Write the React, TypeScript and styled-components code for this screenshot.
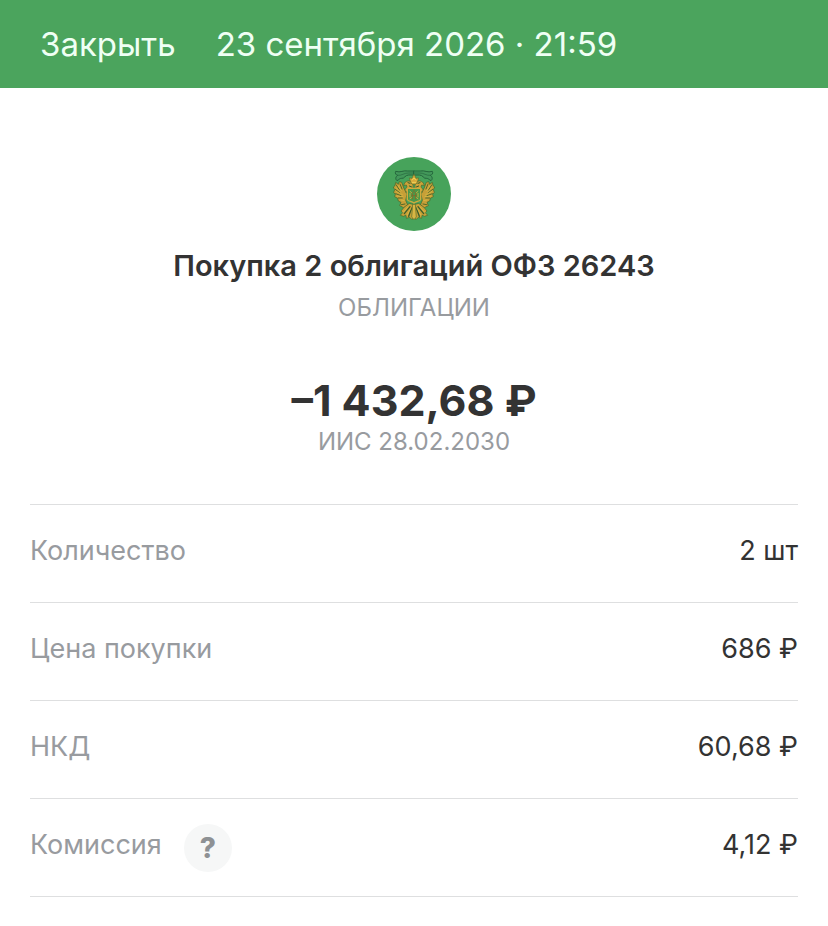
import React from 'react';
import styled, { createGlobalStyle } from 'styled-components';

interface DetailItem {
  label: string;
  value: string;
  hint?: string;
}

const details: DetailItem[] = [
  { label: 'Количество', value: '2 шт' },
  { label: 'Цена покупки', value: '686 ₽' },
  { label: 'НКД', value: '60,68 ₽' },
  { label: 'Комиссия', value: '4,12 ₽', hint: 'Подробнее о комиссии' },
];

const GlobalStyle = createGlobalStyle`
  * {
    box-sizing: border-box;
  }

  body {
    margin: 0;
    background: #ffffff;
    color: #333333;
    font-family: Inter, 'Liberation Sans', sans-serif;
  }
`;

const TopBar = styled.header`
  display: flex;
  align-items: center;
  gap: 40px;
  padding: 22px 40px;
  background: #4ba45d;
  color: #effff4;
  font-size: 33px;
  line-height: 44px;
`;

const CloseButton = styled.button`
  padding: 0;
  border: none;
  background: none;
  color: inherit;
  font: inherit;
  cursor: pointer;
`;

const Content = styled.main`
  padding: 68px 30px 28px;
`;

const Summary = styled.section`
  display: flex;
  flex-direction: column;
  align-items: center;
  text-align: center;
`;

const Emblem = styled.svg`
  width: 76px;
  height: 76px;
`;

const Title = styled.h1`
  margin: 16px 0 0;
  font-size: 29px;
  font-weight: 600;
  line-height: 36px;
`;

const Caption = styled.p`
  margin: 0;
  color: #989b9f;
  font-size: 24px;
  line-height: 32px;
`;

const Category = styled(Caption)`
  margin-top: 8px;
`;

const Amount = styled.p`
  margin: 50px 0 0;
  font-size: 43px;
  font-weight: 700;
  line-height: 52px;
`;

const DetailList = styled.dl`
  margin: 46px 0 0;
  border-bottom: 1px solid #dedfe0;
`;

const DetailRow = styled.div`
  display: flex;
  align-items: center;
  justify-content: space-between;
  height: 98px;
  padding-bottom: 6px;
  border-top: 1px solid #dedfe0;
  font-size: 27px;
  line-height: 36px;
`;

const DetailLabel = styled.dt`
  display: flex;
  align-items: center;
  gap: 22px;
  color: #989b9f;
`;

const DetailValue = styled.dd`
  margin: 0;
`;

const HintButton = styled.button`
  width: 48px;
  height: 48px;
  margin-top: 6px;
  padding: 0;
  border: none;
  border-radius: 50%;
  background: #f6f7f7;
  color: #8e9194;
  font-family: inherit;
  font-size: 28px;
  font-weight: 800;
  line-height: 48px;
  cursor: pointer;
`;

const EagleWing: React.FC = () => (
  <g strokeLinejoin="round" strokeLinecap="round">
    <path
      d="M80 92 L74 76 L67 74 L64 82 L56 76 L54 86 L49 90 L53 98 L50 106 L55 112 L53 119 L62 124 L64 132 L72 136 L68 146 L80 152 L92 144 L86 130 L90 112 Z"
      fill="#c79f37"
      stroke="#43652a"
      strokeWidth="2"
    />
    <path
      d="M69 81 L75 96 M58 84 L68 100 M55 97 L69 108 M56 110 L72 116 M64 123 L76 123 M73 143 L84 141"
      fill="none"
      stroke="#53692a"
      strokeWidth="3"
    />
    <path
      d="M63 86 L73 101 M58 93 L70 104 M58 104 L76 113 M60 117 L78 119 M72 129 L82 131"
      fill="none"
      stroke="#dcbf48"
      strokeWidth="2"
    />
    <path
      d="M105 79 C101 69 89 70 83 78 L80 86 L88 84 L90 90 L84 98 L86 106 L94 100 L108 93 L108 84 Z"
      fill="#cca239"
      stroke="#52682a"
      strokeWidth="2"
    />
    <path d="M93 77 L99 79 M97 87 L104 90" fill="none" stroke="#315d2e" strokeWidth="3" />
    <path
      d="M96 140 L82 150 L72 162 L77 167 L70 175 L80 178 L87 174 L88 184 L98 181 L104 187 L112 183 L110 143 Z"
      fill="#c9a138"
      stroke="#4a682a"
      strokeWidth="2"
    />
    <path d="M99 149 L82 170 M104 153 L95 178" fill="none" stroke="#395d2b" strokeWidth="4" />
    <path
      d="M93 150 L79 165 M102 153 L90 175 M107 156 L104 181"
      fill="none"
      stroke="#e0c34c"
      strokeWidth="2"
    />
  </g>
);

const RibbonHalf: React.FC = () => (
  <g strokeLinejoin="round" strokeLinecap="round" stroke="#24653c">
    <path
      d="M111 42 L92 42 C80 39 70 48 56 43 C53 49 57 54 62 55 C56 59 54 66 60 71 C66 68 68 64 74 64 C82 66 84 54 95 54 L111 54 Z"
      fill="#43985a"
      strokeWidth="3"
    />
    <path d="M62 55 C74 57 82 47 95 48 L111 48" fill="none" strokeWidth="2" />
  </g>
);

const BondEmblem: React.FC = () => (
  <Emblem viewBox="-3 -3 228 228" aria-hidden="true">
    <circle cx="111" cy="111" r="111" fill="#47a35b" />
    <EagleWing />
    <g transform="translate(222 0) scale(-1 1)">
      <EagleWing />
    </g>
    <path
      d="M107 142 L115 142 L118 180 L111 188 L104 180 Z"
      fill="#d9b644"
      stroke="#4d6629"
      strokeWidth="2"
    />
    <RibbonHalf />
    <g transform="translate(222 0) scale(-1 1)">
      <RibbonHalf />
    </g>
    <path
      d="M101 76 L97 63 L105 64 L108 57 L111 52 L114 57 L117 64 L125 63 L121 76 L116 82 L106 82 Z"
      fill="#d8a838"
      stroke="#59702d"
      strokeWidth="2"
    />
    <path d="M105 70 L111 63 L117 70 M105 76 L117 76" fill="none" stroke="#efd45c" strokeWidth="3" />
    <path
      d="M91 94 L131 94 L131 127 C129 134 119 132 111 138 C103 132 93 134 91 127 Z"
      fill="#4a9849"
      stroke="#d0aa3d"
      strokeWidth="4"
    />
    <path
      d="M98 102 L107 110 M124 102 L115 110 M98 126 L108 119 M124 126 L114 119 M99 108 L99 121 M123 108 L123 121"
      fill="none"
      stroke="#c5b143"
      strokeWidth="3"
    />
    <path
      d="M106 106 L106 127 M116 106 L116 127 M103 116 L119 116 M111 99 L111 107"
      fill="none"
      stroke="#806f2b"
      strokeWidth="3"
    />
  </Emblem>
);

const App: React.FC = () => {
  return (
    <>
      <GlobalStyle />
      <TopBar>
        <CloseButton type="button">Закрыть</CloseButton>
        <time dateTime="2026-09-23T21:59">23 сентября 2026 · 21:59</time>
      </TopBar>
      <Content>
        <Summary>
          <BondEmblem />
          <Title>Покупка 2 облигаций ОФЗ 26243</Title>
          <Category>ОБЛИГАЦИИ</Category>
          <Amount>–1 432,68 ₽</Amount>
          <Caption>ИИС 28.02.2030</Caption>
        </Summary>
        <DetailList>
          {details.map((item) => (
            <DetailRow key={item.label}>
              <DetailLabel>
                {item.label}
                {item.hint && (
                  <HintButton type="button" aria-label={item.hint}>
                    ?
                  </HintButton>
                )}
              </DetailLabel>
              <DetailValue>{item.value}</DetailValue>
            </DetailRow>
          ))}
        </DetailList>
      </Content>
    </>
  );
};

export default App;
